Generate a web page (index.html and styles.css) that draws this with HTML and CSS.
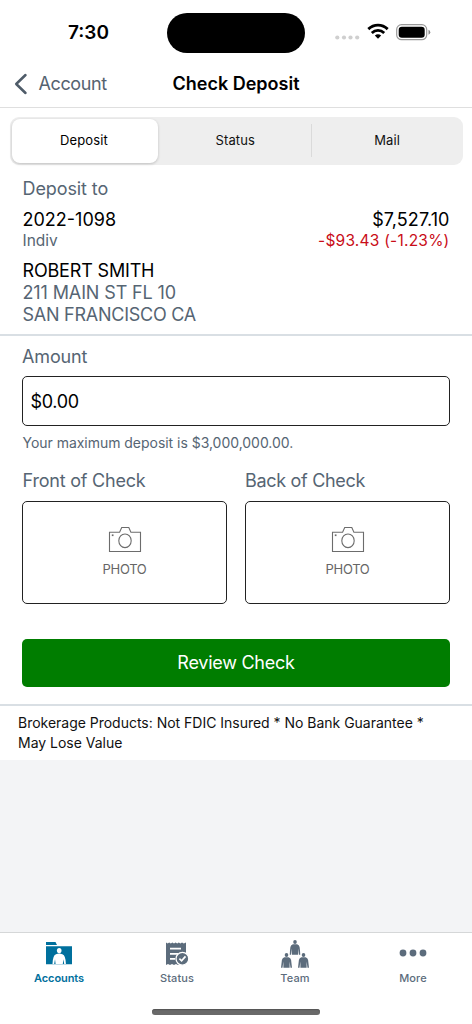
FILE: index.html
```html
<!DOCTYPE html>
<html lang="en">
<head>
<meta charset="utf-8">
<meta name="viewport" content="width=device-width, initial-scale=1">
<title>Check Deposit</title>
<link rel="stylesheet" href="styles.css">
</head>
<body>
<svg class="defs" width="0" height="0" aria-hidden="true">
  <symbol id="camera" viewBox="0 0 34 28">
    <path d="M1.5 6.2H11.6L13.7 1.5H20.8L22.9 6.2H32.5V25.5H1.5Z" fill="none" stroke="#6c6c6c" stroke-width="1.1"/>
    <ellipse cx="17" cy="14.8" rx="6.2" ry="6.8" fill="none" stroke="#6c6c6c" stroke-width="1.1"/>
    <rect x="3.8" y="8.4" width="1.7" height="1.7" fill="#6c6c6c"/>
  </symbol>
  <symbol id="person" viewBox="0 0 11 15">
    <ellipse cx="5.5" cy="2" rx="1.8" ry="2"/>
    <path d="M3.4 4.2H7.6Q9.6 4.6 10.1 7L11 14.8H9.5L8.6 8.6V14.8H2.4V8.6L1.5 14.8H0L.9 7Q1.4 4.6 3.4 4.2Z"/>
  </symbol>
</svg>
<div class="screen">
  <div class="statusbar">
    <div class="time">7:30</div>
    <div class="island"></div>
    <div class="indicators">
      <svg class="dots" width="25" height="5" viewBox="0 0 25 5" fill="#cfcfcf"><circle cx="2.3" cy="2.5" r="2.1"/><circle cx="9" cy="2.5" r="2.1"/><circle cx="15.5" cy="2.5" r="2.1"/><circle cx="22.2" cy="2.5" r="2.1"/></svg>
      <svg class="wifi" width="22" height="16" viewBox="0 0 22 16" fill="none" stroke="#000" stroke-width="2.8"><path d="M1.3 6.1C6.9.9 15.1.9 20.7 6.1"/><path d="M4.8 9.9C8.4 6.5 13.6 6.5 17.2 9.9"/><path d="M11 15.7L7.8 12.5Q11 9.9 14.2 12.5Z" fill="#000" stroke="none"/></svg>
      <svg class="battery" width="35" height="17" viewBox="0 0 35 17"><rect x=".7" y=".7" width="30" height="15" rx="4.8" fill="none" stroke="#999" stroke-width="1.2"/><rect x="2.7" y="2.7" width="26" height="11" rx="3.2"/><path d="M32.5 5.8Q34.3 6.5 34.3 8.3T32.5 10.8Z" fill="#888"/></svg>
    </div>
  </div>
  <header class="header">
    <a class="back">
      <svg width="14" height="22" viewBox="0 0 14 22"><path d="M11.5 2L2.2 11L11.5 20" fill="none" stroke="#4f5c69" stroke-width="2.5" stroke-linecap="round" stroke-linejoin="round"/></svg>
      <span class="back-label">Account</span>
    </a>
    <h1 class="title">Check Deposit</h1>
  </header>
  <main class="content">
    <div class="segments">
      <div class="segment selected">Deposit</div>
      <div class="segment">Status</div>
      <div class="segment divided">Mail</div>
    </div>
    <section class="account">
      <h2 class="label label-deposit">Deposit to</h2>
      <div class="row"><span class="number">2022-1098</span><span class="balance">$7,527.10</span></div>
      <div class="row detail"><span class="kind">Indiv</span><span class="loss">-$93.43 (-1.23%)</span></div>
      <address class="address"><div class="name">ROBERT SMITH</div><div class="street">211 MAIN ST FL 10</div><div class="city">SAN FRANCISCO CA</div></address>
    </section>
    <section class="form">
      <div class="label"><span class="label-amount">Amount</span></div>
      <div class="amount"><span>$0.00</span></div>
      <div class="hint">Your maximum deposit is $3,000,000.00.</div>
      <div class="photos">
        <div><div class="label label-front">Front of Check</div><div class="photo"><svg width="34" height="28"><use href="#camera"/></svg><span>PHOTO</span></div></div>
        <div><div class="label label-back">Back of Check</div><div class="photo"><svg width="34" height="28"><use href="#camera"/></svg><span>PHOTO</span></div></div>
      </div>
      <div class="review"><span>Review Check</span></div>
    </section>
    <p class="disclosure">Brokerage Products: Not FDIC Insured * No Bank Guarantee *<br>May Lose Value</p>
  </main>
  <nav class="tabs">
    <div class="tab active">
      <svg width="30" height="30" viewBox="0 0 30 30"><path d="M2 2H11.5L13 5H2ZM2 6.2H28V24.3H2Z" fill="#00709d"/><g fill="#fff"><ellipse cx="15.2" cy="10.6" rx="2.3" ry="2.7"/><path d="M8.5 24Q8.6 15.5 12 14.2Q15.2 13 18.4 14.2Q21.8 15.5 21.9 24H20.2L19.4 19.2L18.8 24H11.6L11 19.2L10.2 24Z"/></g></svg>
      <span>Accounts</span>
    </div>
    <div class="tab">
      <svg width="30" height="30" viewBox="0 0 30 30"><path d="M4 2.5L5.6 3.6L7.2 2.5L8.8 3.6L10.4 2.5L12 3.6L13.6 2.5L15.2 3.6L16.8 2.5L18.4 3.6L20 2.5L21.8 3.6L24 2.5V25L22 24L20 25L18 24L16 25L14 24L12 25L10 24L8 25L6 24L4 25Z" fill="#5c6c7c"/><path d="M8 8.7H19M8 13.8H16M8 18.8H13" stroke="#fff" stroke-width="1.7"/><circle cx="20.4" cy="18.8" r="6.4" fill="#5c6c7c" stroke="#fff" stroke-width="1.3"/><path d="M17.4 18.7L19.6 20.8L23.5 16.4" fill="none" stroke="#fff" stroke-width="1.7"/></svg>
      <span>Status</span>
    </div>
    <div class="tab">
      <svg width="30" height="30" viewBox="0 0 30 30" fill="#5c6c7c"><use href="#person" x="9.5" y="0" width="11" height="15"/><use href="#person" x="1" y="13" width="11" height="15"/><use href="#person" x="18" y="13" width="11" height="15"/></svg>
      <span>Team</span>
    </div>
    <div class="tab">
      <svg width="30" height="30" viewBox="0 0 30 30" fill="#5c6c7c"><circle cx="5" cy="13" r="3.4"/><circle cx="15" cy="13" r="3.4"/><circle cx="25" cy="13" r="3.4"/></svg>
      <span>More</span>
    </div>
  </nav>
  <div class="home"></div>
</div>
</body>
</html>
```
FILE: styles.css
```css
* { box-sizing: border-box; }
body { margin: 0; font-family: Inter, "Liberation Sans", sans-serif; color: #000; background: #fff; }
h1, h2, p { margin: 0; font-weight: 400; }
.defs { position: absolute; }
.screen { width: 472px; height: 1024px; display: flex; flex-direction: column; overflow: hidden; background: #f3f4f6; white-space: nowrap; }

.statusbar { height: 60px; flex: none; display: grid; grid-template-columns: 167px 138px 1fr; background: #fff; }
.time { padding-left: 68px; font-size: 19px; font-weight: 600; line-height: 65px; }
.island { height: 40.5px; margin-top: 12.5px; border-radius: 21px; background: #000; }
.indicators { display: flex; align-items: flex-start; padding-left: 30px; }
.dots { margin-top: 35px; }
.wifi { margin: 23px 0 0 7px; }
.battery { margin: 24px 0 0 7px; }

.header { height: 48px; flex: none; display: flex; align-items: center; background: #fff; border-bottom: 1px solid #dfdfdf; padding-left: 14px; }
.back { display: flex; align-items: center; width: 158.5px; gap: 10.5px; color: #566370; font-size: 18px; letter-spacing: -.38px; }
.title { font-size: 18px; font-weight: 600; }

.content { background: #fff; height: 652px; flex: none; padding-top: 8.5px; }
.segments { display: grid; grid-template-columns: repeat(3, 1fr); height: 48px; margin: 0 9px 0 9.5px; padding: 2px; border-radius: 9px; background: #eee; font-size: 13px; letter-spacing: .1px; }
.segment { display: flex; align-items: center; justify-content: center; color: #111; padding: 0 2px 1px 0; }
.selected { background: #fff; border-radius: 8px; margin-right: 3px; box-shadow: 0 1px 3px rgba(0,0,0,.2); color: #000; }
.divided { background: linear-gradient(#dadada, #dadada) left center / 1px 33px no-repeat; padding: 0 0 1px 2px; }

.account { height: 171px; padding: 13px 22.5px 0; border-bottom: 2px solid #d9dfe4; font-size: 18px; }
.label { color: #566573; font-size: 18px; line-height: 22px; }
.label-deposit { letter-spacing: -.1px; }
.label-amount { letter-spacing: -.15px; }
.label-front { letter-spacing: -.21px; }
.label-back { letter-spacing: -.31px; }
.row { display: flex; justify-content: space-between; line-height: 22px; margin-top: 9px; }
.balance { letter-spacing: .08px; }
.detail { font-size: 15.5px; line-height: 20px; margin-top: 0; }
.kind { color: #566573; }
.loss { color: #c90d18; letter-spacing: .23px; }
.address { font-style: normal; line-height: 22.4px; margin-top: 9px; color: #566573; }
.name { color: #000; letter-spacing: -.17px; }
.street { letter-spacing: -.12px; }
.city { letter-spacing: -.25px; }

.form { height: 370px; padding: 10.5px 22px 0; border-bottom: 2px solid #d9dfe4; }
.amount { display: flex; align-items: center; height: 50px; margin-top: 8px; border: 1.4px solid #222; border-radius: 5px; padding: 1.5px 0 0 7.5px; font-size: 18px; letter-spacing: -.35px; }
.hint { margin-top: 7px; color: #566573; font-size: 14px; line-height: 19px; padding-left: .5px; letter-spacing: -.03px; }
.photos { display: grid; grid-template-columns: 205px 205px; justify-content: space-between; margin-top: 18px; }
.label-front { padding-left: .5px; }
.photo { height: 103px; margin-top: 8.5px; border: 1.4px solid #222; border-radius: 5px; display: flex; flex-direction: column; align-items: center; padding-top: 24px; font-size: 13px; line-height: 18px; letter-spacing: -.3px; color: #666; }
.photo svg { margin-bottom: 6px; }
.review { display: flex; align-items: center; justify-content: center; height: 48.5px; margin-top: 35px; border-radius: 5px; background: #007d00; color: #fff; font-size: 18px; letter-spacing: -.25px; }
.disclosure { padding: 7px 18px 0; font-size: 14px; line-height: 20px; letter-spacing: -.015px; color: #111; }

.tabs { display: grid; grid-template-columns: repeat(4, 1fr); height: 72px; flex: none; margin-top: auto; background: #fff; border-top: 1px solid #d5d7d8; padding-top: 6.5px; }
.tab { display: flex; flex-direction: column; align-items: center; color: #5c6c7c; font-size: 11px; font-weight: 500; letter-spacing: .1px; line-height: 16px; }
.active { color: #00709d; font-weight: 600; letter-spacing: -.08px; }
.home { height: 20px; flex: none; background: #fff; padding: 5px 152px 0; }
.home::before { content: ""; display: block; height: 5.5px; border-radius: 3px; background: #696969; box-shadow: inset 0 1px 1px #555; }
```
